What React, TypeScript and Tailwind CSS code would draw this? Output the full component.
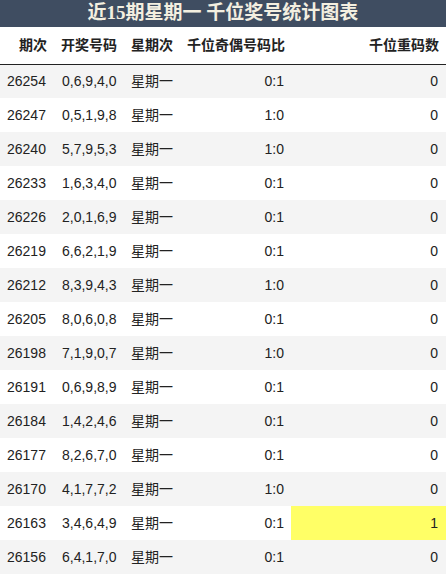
const rows: [string, string, string, string, number][] = [
  ['26254', '0,6,9,4,0', '星期一', '0:1', 0],
  ['26247', '0,5,1,9,8', '星期一', '1:0', 0],
  ['26240', '5,7,9,5,3', '星期一', '1:0', 0],
  ['26233', '1,6,3,4,0', '星期一', '0:1', 0],
  ['26226', '2,0,1,6,9', '星期一', '0:1', 0],
  ['26219', '6,6,2,1,9', '星期一', '0:1', 0],
  ['26212', '8,3,9,4,3', '星期一', '1:0', 0],
  ['26205', '8,0,6,0,8', '星期一', '0:1', 0],
  ['26198', '7,1,9,0,7', '星期一', '1:0', 0],
  ['26191', '0,6,9,8,9', '星期一', '0:1', 0],
  ['26184', '1,4,2,4,6', '星期一', '0:1', 0],
  ['26177', '8,2,6,7,0', '星期一', '0:1', 0],
  ['26170', '4,1,7,7,2', '星期一', '1:0', 0],
  ['26163', '3,4,6,4,9', '星期一', '0:1', 1],
  ['26156', '6,4,1,7,0', '星期一', '0:1', 0],
]

export default function App() {
  return (
    <div className="w-[446px] h-[575px] overflow-hidden bg-white text-[#222] font-['Liberation_Sans','Noto_Sans_CJK_SC',sans-serif]">
      {/* 标题 */}
      <div className="h-[27px] bg-[#3f4d61] flex items-center justify-center text-[19px] font-bold text-[#f3efe0] font-['Liberation_Serif','Noto_Sans_CJK_SC',serif]">
        近15期星期一 千位奖号统计图表
      </div>

      <table className="w-[446px] table-fixed border-collapse text-[14px]">
        <colgroup>
          <col className="w-[54px]" />
          <col className="w-[70px]" />
          <col className="w-[56px]" />
          <col className="w-[111px]" />
          <col className="w-[155px]" />
        </colgroup>
        <thead>
          <tr className="h-[37px] border-b border-[#222] font-bold">
            <th className="px-[7px] text-right">期次</th>
            <th className="px-[7px] text-right">开奖号码</th>
            <th className="px-[7px] text-left">星期次</th>
            <th className="px-[6px] text-right">千位奇偶号码比</th>
            <th className="px-[7px] text-right">千位重码数</th>
          </tr>
        </thead>
        <tbody>
          {rows.map((r, i) => (
            <tr key={r[0]} className={i % 2 === 0 ? 'h-[34px] bg-[#f4f4f4]' : 'h-[34px] bg-white'}>
              <td className="pl-[7px]">{r[0]}</td>
              <td className="pl-[8px]">{r[1]}</td>
              <td className="pl-[7px]">{r[2]}</td>
              <td className="pr-[7px] text-right">{r[3]}</td>
              <td className={r[4] > 0 ? 'pr-[8px] text-right bg-[#ffff66]' : 'pr-[8px] text-right'}>{r[4]}</td>
            </tr>
          ))}
        </tbody>
      </table>
    </div>
  )
}
